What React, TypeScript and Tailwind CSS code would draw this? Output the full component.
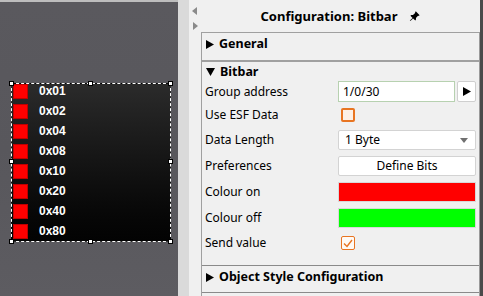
import React from 'react';
import { BsPinAngleFill } from 'react-icons/bs';

const bits = ['0x01', '0x02', '0x04', '0x08', '0x10', '0x20', '0x40', '0x80'];

const TriRight = () => (
  <svg width="8" height="9" viewBox="0 0 8 9" className="shrink-0">
    <polygon points="0,0 8,4.5 0,9" fill="#000" />
  </svg>
);

const TriDown = () => (
  <svg width="9" height="8" viewBox="0 0 9 8" className="shrink-0">
    <polygon points="0,0 9,0 4.5,8" fill="#000" />
  </svg>
);

const Handle = ({ className }: { className: string }) => (
  <div className={`absolute w-[5px] h-[5px] bg-white border border-black ${className}`} />
);

const BitbarWidget: React.FC = () => (
  <div className="relative w-[160px] h-[159px] border border-dashed border-white bg-gradient-to-b from-[#2b2b2b] to-[#030303]">
    <div className="flex flex-col pl-[1px]">
      {bits.map(b => (
        <div key={b} className="flex items-start h-[20px]">
          <div className="w-[15px] h-[15px] bg-[#ff0000] border border-[#c00000]" />
          <span className="ml-[11px] text-white font-bold text-[12px] leading-[15px]" style={{ fontFamily: '"Liberation Sans", Arial, sans-serif' }}>{b}</span>
        </div>
      ))}
    </div>
    <Handle className="-left-[3px] -top-[3px]" />
    <Handle className="left-[76px] -top-[3px]" />
    <Handle className="-right-[3px] -top-[3px]" />
    <Handle className="-left-[3px] top-[75px]" />
    <Handle className="-right-[3px] top-[75px]" />
    <Handle className="-left-[3px] -bottom-[3px]" />
    <Handle className="left-[76px] -bottom-[3px]" />
    <Handle className="-right-[3px] -bottom-[3px]" />
  </div>
);

const Row: React.FC<{ label: string; className?: string; children: React.ReactNode }> = ({ label, className, children }) => (
  <div className={`flex items-center pl-[3px] pr-[3px] ${className ?? ''}`}>
    <span className="w-[133px] shrink-0">{label}</span>
    <div className="flex-1 flex items-center">{children}</div>
  </div>
);

const SectionHeader: React.FC<{ open?: boolean; text: string; className?: string }> = ({ open, text, className }) => (
  <div className={`flex items-center gap-[5px] pl-[4px] font-bold text-[12.5px] ${className ?? ''}`}>
    {open ? <TriDown /> : <TriRight />}
    <span>{text}</span>
  </div>
);

export default function App() {
  return (
    <div className="w-[483px] h-[296px] flex overflow-hidden text-[12px] text-black" style={{ fontFamily: '"Noto Sans", "Open Sans", sans-serif' }}>
      {/* canvas */}
      <div className="w-[178px] h-full border-t-2 border-[#bdbdbd] bg-gradient-to-b from-[#5a595e] via-[#58575c] to-[#5d5c61] pt-[81px] pl-[11px]">
        <BitbarWidget />
      </div>
      {/* splitter */}
      <div className="w-[11px] h-full bg-[#dadada]" />
      {/* panel */}
      <div className="flex-1 h-full bg-[#f0f0f0] flex">
        <div className="w-[12px] shrink-0 flex flex-col items-center pt-[7px] gap-[7px]">
          <svg width="5" height="8" viewBox="0 0 5 8" className="-ml-[2px]"><polygon points="5,0 0,4 5,8" fill="#8a8a8a" /></svg>
          <svg width="5" height="8" viewBox="0 0 5 8"><polygon points="0,0 5,4 0,8" fill="#8a8a8a" /></svg>
        </div>
        <div className="flex-1 flex flex-col">
          <div className="h-[32px] flex items-center justify-center gap-[12px] font-bold text-[13px] pt-[1px]">
            <span>Configuration: Bitbar</span>
            <BsPinAngleFill className="w-[11px] h-[11px]" />
          </div>
          <div className="flex-1 border-l border-[#a0a0a0] border-r border-r-[#9a9a9a] flex flex-col">
            <div className="border-t border-[#a0a0a0] h-[28px]">
              <SectionHeader text="General" className="h-[20px] mt-[1px]" />
            </div>
            <div className="border-t-2 border-[#a0a0a0] flex flex-col pb-[14px]">
              <SectionHeader open text="Bitbar" className="h-[18px] mt-[1px]" />
              <Row label="Group address" className="h-[21px]">
                <div className="flex-1 h-[21px] bg-white border border-[#b7d1b0] flex items-center pl-[4px]">1/0/30</div>
                <div className="ml-[2px] w-[19px] h-[21px] bg-white border border-[#cfcfcf] rounded-[2px] flex items-center justify-center">
                  <svg width="8" height="9" viewBox="0 0 8 9"><polygon points="0,0 8,4.5 0,9" fill="#000" /></svg>
                </div>
              </Row>
              <Row label="Use ESF Data" className="h-[18px] mt-[4px]">
                <div className="ml-[3px] w-[14px] h-[14px] rounded-[2px] border-2 border-[#e87522] bg-[#fdf0e6]" />
              </Row>
              <Row label="Data Length" className="h-[20px] mt-[6px]">
                <div className="flex-1 h-[20px] bg-white border border-[#d3d3d3] rounded-[2px] flex items-center pl-[6px] pr-[7px] justify-between">
                  <span>1 Byte</span>
                  <svg width="8" height="5" viewBox="0 0 8 5"><polygon points="0,0 8,0 4,5" fill="#707070" /></svg>
                </div>
              </Row>
              <Row label="Preferences" className="h-[20px] mt-[6px]">
                <div className="flex-1 h-[20px] bg-white border border-[#d3d3d3] rounded-[2px] flex items-center justify-center">Define Bits</div>
              </Row>
              <Row label="Colour on" className="h-[20px] mt-[6px]">
                <div className="flex-1 h-[20px] bg-[#ff0000] border border-[#d8d8d8]" />
              </Row>
              <Row label="Colour off" className="h-[20px] mt-[6px]">
                <div className="flex-1 h-[20px] bg-[#00ff00] border border-[#d8d8d8]" />
              </Row>
              <Row label="Send value" className="h-[16px] mt-[7px]">
                <div className="ml-[3px] w-[14px] h-[14px] rounded-[2px] border border-[#e87522] bg-[#fffaf5] flex items-center justify-center">
                  <svg width="10" height="9" viewBox="0 0 10 9"><polyline points="1,4.5 4,7.5 9,1" fill="none" stroke="#e87522" strokeWidth="1.4" /></svg>
                </div>
              </Row>
            </div>
            <div className="border-t border-[#8a8a8a] h-[27px]">
              <SectionHeader text="Object Style Configuration" className="h-[20px] mt-[1px]" />
            </div>
            <div className="border-t border-[#8a8a8a] flex-1" />
          </div>
        </div>
      </div>
      <div className="w-[3px] h-full bg-[#4a4a4a]" />
    </div>
  );
}
